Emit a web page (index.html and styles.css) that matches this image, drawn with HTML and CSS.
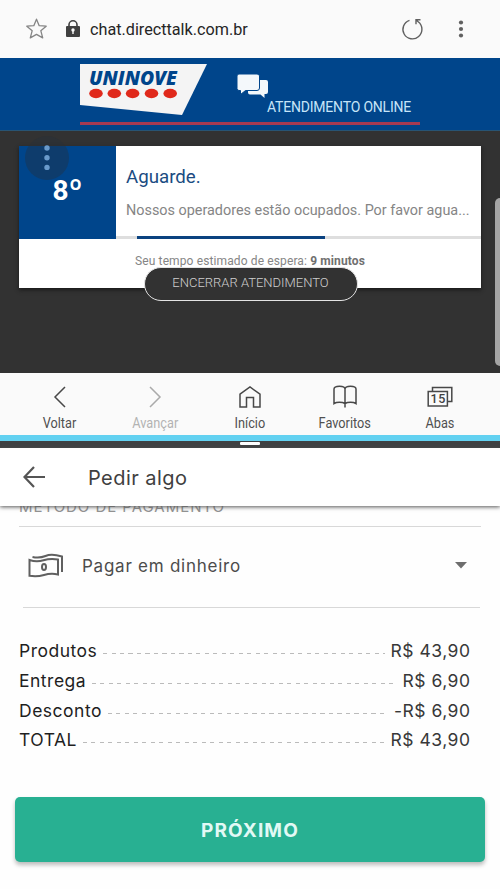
FILE: index.html
```html
<!DOCTYPE html>
<html lang="pt-BR">
<head>
<meta charset="utf-8">
<title>Atendimento online</title>
<link rel="stylesheet" href="styles.css">
</head>
<body>
<main class="screen">
  <header class="address">
    <svg class="star" width="22" height="22" viewBox="0 0 22 22"><path d="M10.500 1.200l2.700 6.500 7 .5-5.400 4.500 1.900 7.200-6.200-3.500-6.200 3.500 1.900-7.200L.8 8.200l7-.5z" fill="none" stroke="#858585" stroke-width="1.300" stroke-linejoin="round"/></svg>
    <svg class="lock" width="14" height="18" viewBox="0 0 14 18"><path d="M3 8V4.800a4 4 0 0 1 8 0V8" fill="none" stroke="#404040" stroke-width="1.600"/><rect y="6" width="14" height="11" rx="1" fill="#404040"/><circle cx="7" cy="10" r="1.700" fill="#fafafa"/><path d="M7 10v4" stroke="#fafafa" stroke-width="1.400"/></svg>
    <span class="url">chat.directtalk.com.br</span>
    <svg class="reload" width="22" height="24" viewBox="0 0 22 24"><path d="M8.500 3.300a9.500 9.500 0 1 0 8.700 1.500L14.800 2.800M15 7.200V2.800h4.500" fill="none" stroke="#606060" stroke-width="1.400"/></svg>
    <svg class="more" width="6" height="20" viewBox="0 0 6 20" fill="#606060"><circle cx="3" cy="3.500" r="2.100"/><circle cx="3" cy="10" r="2.100"/><circle cx="3" cy="16.500" r="2.100"/></svg>
  </header>
  <section class="brand">
    <div class="brand-row">
      <svg class="logo" width="127" height="51" viewBox="0 0 127 51"><path d="M0 0h127l-25 51L0 41z" fill="#f4f4f4"/><text x="9" y="21" textLength="88" lengthAdjust="spacingAndGlyphs" class="logo-name">UNINOVE</text><g fill="#e0291b"><ellipse cx="16" cy="29.500" rx="6.800" ry="4.700"/><ellipse cx="34.300" cy="29.500" rx="6.800" ry="4.700"/><ellipse cx="52.600" cy="29.500" rx="6.800" ry="4.700"/><ellipse cx="71.500" cy="29.500" rx="6.800" ry="4.700"/><ellipse cx="90.200" cy="29.500" rx="6.800" ry="4.700"/></g></svg>
      <div class="service">
        <svg width="32" height="26" viewBox="0 0 32 26"><path d="M11 6h18q2 0 2 2v10q0 2-2 2h-1.500v4l-4-3.500H13q-2 0-2-2z" fill="#f4f8fb"/><path d="M2 0h18q2.500 0 2.500 2v12q0 2.500-2.500 2.500H8.500L3.500 20.500V16.500H2q-2 0-2-2V2Q0 0 2 0z" fill="#f4f8fb" stroke="#00458b" stroke-width="1"/></svg>
        <span class="service-name">ATENDIMENTO ONLINE</span>
      </div>
    </div>
  </section>
  <section class="chat">
    <div class="card">
      <div class="card-top">
        <div class="position">8<span>º</span></div>
        <div class="message">
          <h1>Aguarde.</h1>
          <p>Nossos operadores estão ocupados. Por favor agua...</p>
          <div class="progress"><div class="progress-fill"></div></div>
        </div>
      </div>
      <div class="wait"><span>Seu tempo estimado de espera: <b>9 minutos</b></span></div>
      <button class="end">ENCERRAR ATENDIMENTO</button>
      <div class="bubble"><svg width="6" height="26" viewBox="0 0 6 26" fill="#699acb"><circle cx="3" cy="3" r="2.700"/><circle cx="3" cy="12.700" r="2.700"/><circle cx="3" cy="22.400" r="2.700"/></svg></div>
    </div>
    <div class="edge"></div>
  </section>
  <nav class="toolbar">
    <a><svg width="28" height="24" viewBox="0 0 28 24"><path d="M19 2L9 12l10 10"/></svg><span>Voltar</span></a>
    <a class="off"><svg width="28" height="24" viewBox="0 0 28 24"><path d="M9 2l10 10L9 22"/></svg><span>Avançar</span></a>
    <a><svg width="28" height="24" viewBox="0 0 28 24"><path d="M4 9.200L14 2l10 7.200V22h-6.500v-9.500h-7V22H4z"/></svg><span>Início</span></a>
    <a><svg width="28" height="24" viewBox="0 0 28 24"><path d="M14 18.500V4q0-2.800-5.500-2.800Q3 1.200 3 4v14.500q2-1.300 5.500-1.300t5.500 1.300q2-1.300 5.500-1.300t5.500 1.300V4q0-2.800-5.500-2.800T14 4M14 18v4.500"/></svg><span>Favoritos</span></a>
    <a><svg width="28" height="24" viewBox="0 0 28 24"><path d="M6.500 6V2.500h19.300v14H21.500M2.200 6.500h19.200V21H2.200z"/><text x="12.200" y="18.200" text-anchor="middle" class="tab-count">15</text></svg><span>Abas</span></a>
  </nav>
  <div class="divider"><i></i></div>
  <header class="appbar">
    <svg width="23" height="22" viewBox="0 0 23 22"><path d="M11 1L1.500 11l9.500 10M1.500 11H22" fill="none" stroke="#555" stroke-width="2.200"/></svg>
    <h2>Pedir algo</h2>
  </header>
  <section class="order">
    <div class="section-clip"><span class="section-title">MÉTODO DE PAGAMENTO</span></div>
    <div class="payment">
      <svg width="36" height="26" viewBox="0 0 36 26" fill="none" stroke="#606060" stroke-width="2"><path d="M1.500 7q7 2.500 14 .3t14.500-.8v15q-7-1.500-14 .5t-14.500.8z"/><path d="M4.500 4q7 1.500 13-1t16.500.5V19"/><ellipse cx="16" cy="14" rx="2" ry="3"/></svg>
      <span class="method">Pagar em dinheiro</span>
      <svg class="caret" width="12" height="7" viewBox="0 0 12 7"><path d="M0 0h12L6 6.500z" fill="#6e6e6e"/></svg>
    </div>
    <dl class="totals">
      <div><dt>Produtos</dt><i></i><dd>R$ 43,90</dd></div>
      <div><dt>Entrega</dt><i></i><dd>R$ 6,90</dd></div>
      <div><dt>Desconto</dt><i></i><dd>-R$ 6,90</dd></div>
      <div><dt>TOTAL</dt><i></i><dd>R$ 43,90</dd></div>
    </dl>
    <button class="next">PRÓXIMO</button>
  </section>
</main>
</body>
</html>
```
FILE: styles.css
```css
* { box-sizing: border-box; }
body { margin: 0; background: #fefefe; font-family: Roboto, sans-serif; }
h1, h2, p, dl, dd { margin: 0; font-weight: 400; }
button { border: 0; padding: 0; font-family: inherit; }
svg { display: block; flex: none; }
.screen { width: 500px; height: 889px; overflow: hidden; display: flex; flex-direction: column; }
.address { height: 58px; flex: none; background: #fafafa; display: flex; align-items: center; padding: 0 36px 0 26px; }
.lock { margin-left: 18px; }
.url { font-size: 16.2px; color: #252525; margin-left: 10px; white-space: nowrap; }
.reload { margin-left: auto; }
.more { margin-left: 35px; }
.brand { height: 73px; flex: none; background: #00458b; border-bottom: 1px solid #285473; padding: 6px 80px 0; }
.brand-row { height: 61px; border-bottom: 3px solid #a53a52; display: flex; }
.logo-name { font: italic 800 19px "Open Sans", sans-serif; fill: #00458b; }
.service { margin: 10px 0 0 30px; display: flex; flex-direction: column; }
.service-name { font-size: 14px; line-height: 16px; color: #c6e4f8; margin: -1px 0 0 30px; white-space: nowrap; letter-spacing: -.2px; }
.chat { height: 242px; flex: none; background: #323232; padding: 15px 19px; position: relative; }
.card { width: 462px; height: 142px; background: #fff; position: relative; box-shadow: 0 2px 4px #1a1a1a; }
.card-top { display: flex; height: 93px; }
.position { width: 97px; flex: none; background: #00458b; color: #fff; font-weight: 700; font-size: 28px; line-height: 89px; text-align: center; }
.position span { font-size: 30px; line-height: 1; }
.message { flex: 1; min-width: 0; display: flex; flex-direction: column; }
.message h1 { font-size: 18.7px; line-height: 24px; color: #1b4c82; margin: 19px 0 0 10px; }
.message p { font-size: 14.4px; line-height: 20px; color: #858585; margin: 12px 0 0 10px; white-space: nowrap; }
.progress { height: 3px; background: #dedede; margin-top: auto; }
.progress-fill { width: 188px; height: 3px; margin-left: 21px; background: #0a4280; }
.wait { font-size: 12px; line-height: 16px; color: #858585; text-align: center; padding-top: 14px; letter-spacing: .12px; }
.wait b { color: #707070; }
.end { position: absolute; left: 125px; top: 121px; width: 214px; height: 34px; border: 1px solid #e4e4e4; border-radius: 17px; background: #323232; color: #cfcfcf; font-size: 13px; font-weight: 300; padding: 0 1px 4px 0; }
.bubble { position: absolute; left: 6px; top: -10px; width: 44px; height: 44px; border-radius: 50%; background: rgba(38,48,58,.38); display: grid; place-items: center; }
.edge { position: absolute; right: 0; top: 67px; width: 5px; height: 168px; border-radius: 5px 0 0 5px; background: #a5a5a5; }
.toolbar { height: 62px; flex: none; background: #fafafa; display: grid; grid-template-columns: repeat(5, 95.2px); padding: 12px 12px 0; color: #505050; }
.toolbar a { display: flex; flex-direction: column; align-items: center; }
.toolbar svg { fill: none; stroke: #484848; stroke-width: 1.5; }
.toolbar .tab-count { font: 500 12.5px Roboto, sans-serif; fill: #404040; stroke: none; letter-spacing: .5px; }
.toolbar span { font-size: 14px; line-height: 18px; margin-top: 5px; transform: scaleX(.91); }
.toolbar .off { color: #b3b3b3; }
.toolbar .off svg { stroke: #aaa; }
.divider { height: 13px; flex: none; background: #3f4142; border-top: 6px solid #62d1f1; display: flex; justify-content: center; }
.divider i { width: 20px; height: 3px; background: #fff; margin-top: 1px; border-radius: 1px; }
.appbar { height: 58px; flex: none; display: flex; align-items: center; padding: 0 23px; background: #fff; box-shadow: 0 1px 4px #555; position: relative; }
.appbar h2 { font: 400 20px Inter, sans-serif; color: #404040; margin: 2px 0 0 42px; white-space: nowrap; letter-spacing: .45px; }
.order { display: flow-root; flex: 1; font-family: Inter, sans-serif; padding: 0 15px; }
.section-clip { display: flow-root; margin: 0 4px; height: 21px; border-bottom: 1px solid #d8d8d8; }
.section-title { display: block; font-size: 15px; line-height: 18px; margin-top: -8px; color: #929292; white-space: nowrap; letter-spacing: .95px; }
.payment { height: 81px; margin: 0 5px 0 8px; border-bottom: 1px solid #d8d8d8; display: flex; align-items: center; padding: 0 13px 3px 5px; }
.method { font-size: 17px; color: #4c4c4c; margin-left: 18px; letter-spacing: .75px; }
.caret { margin-left: auto; }
.totals { margin: 28px 15px 0 4px; }
.totals div { height: 29.7px; display: flex; align-items: center; font-size: 17.5px; white-space: nowrap; letter-spacing: .5px; }
.totals dt { color: #1f1f1f; }
.totals dd { color: #383838; margin-right: -.5px; }
.totals i { flex: 1; height: 1px; margin: 6px 6px 0; background: repeating-linear-gradient(90deg, #bbb 0 4px, transparent 4px 8.5px); }
.next { display: block; width: 470px; height: 65px; margin-top: 42px; padding-top: 2px; border-radius: 5px; background: #28b092; color: #e2f9f5; font: 700 19px Inter, sans-serif; letter-spacing: 1.1px; box-shadow: 0 3px 4px #bbb; }
```
